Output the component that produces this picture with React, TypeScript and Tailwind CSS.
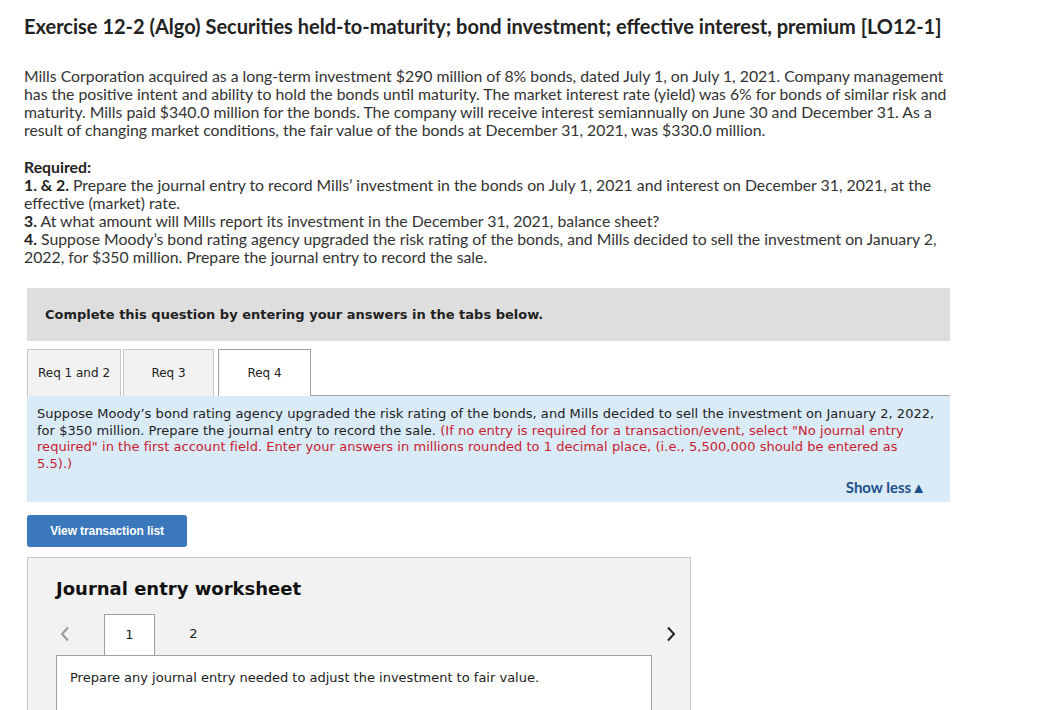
import React from 'react'

const sans = "font-['Lato',sans-serif]"
const verdana = "font-['DejaVu_Sans',Verdana,sans-serif]"

const App = () => {
  return (
    <div className="min-h-[710px] bg-white text-[#333]">
      <div className="w-[962px] pl-[24px] pt-[13px]">
        {/* Heading */}
        <h1 className={`${sans} text-[20px] font-bold leading-[26px] text-[#222]`}>
          Exercise 12-2 (Algo) Securities held-to-maturity; bond investment; effective interest, premium [LO12-1]
        </h1>

        <p className={`${sans} mt-[28px] text-[15.8px] leading-[18px]`}>
          Mills Corporation acquired as a long-term investment $290 million of 8% bonds, dated July 1, on July 1, 2021. Company management
          has the positive intent and ability to hold the bonds until maturity. The market interest rate (yield) was 6% for bonds of similar risk and
          maturity. Mills paid $340.0 million for the bonds. The company will receive interest semiannually on June 30 and December 31. As a
          result of changing market conditions, the fair value of the bonds at December 31, 2021, was $330.0 million.
        </p>

        <div className={`${sans} mt-[19px] text-[15.8px] leading-[18px]`}>
          <p className="font-bold text-[#222]">Required:</p>
          <p>
            <b className="text-[#222]">1. &amp; 2.</b> Prepare the journal entry to record Mills’ investment in the bonds on July 1, 2021 and interest on December 31, 2021, at the effective (market) rate.
          </p>
          <p>
            <b className="text-[#222]">3.</b> At what amount will Mills report its investment in the December 31, 2021, balance sheet?
          </p>
          <p>
            <b className="text-[#222]">4.</b> Suppose Moody’s bond rating agency upgraded the risk rating of the bonds, and Mills decided to sell the investment on January 2, 2022, for $350 million. Prepare the journal entry to record the sale.
          </p>
        </div>
      </div>

      <div className="ml-[27px] mt-[22px] w-[923px]">
        {/* Instruction bar */}
        <div className={`${verdana} flex h-[53px] items-center bg-[#dedede] pl-[18px] text-[13px] font-bold text-[#222]`}>
          Complete this question by entering your answers in the tabs below.
        </div>

        {/* Tabs */}
        <div className={`${verdana} mt-[8px] flex items-end text-[12px] text-[#222]`}>
          <div className="flex h-[47px] w-[94px] items-center justify-center border border-b-0 border-[#c8c8c8] bg-[#f2f2f2]">Req 1 and 2</div>
          <div className="ml-[2px] flex h-[47px] w-[91px] items-center justify-center border border-b-0 border-[#c8c8c8] bg-[#f2f2f2]">Req 3</div>
          <div className="ml-[4px] flex h-[47px] w-[93px] items-center justify-center border border-b-0 border-[#a0a0a0] bg-white">Req 4</div>
          <div className="h-[47px] flex-1 border-b border-[#a0a0a0]" />
        </div>

        <div className={`${verdana} bg-[#daebf8] px-[10px] pb-[6px] pt-[10px] text-[13px] leading-[16.5px] tracking-[0.04px]`}>
          <p className="w-[902px] text-[#222]">
            Suppose Moody’s bond rating agency upgraded the risk rating of the bonds, and Mills decided to sell the investment on January 2, 2022,
            for $350 million. Prepare the journal entry to record the sale.{' '}
            <span className="text-[#c8202f]">
              (If no entry is required for a transaction/event, select "No journal entry required" in the first account field. Enter your answers in millions rounded to 1 decimal place, (i.e., 5,500,000 should be entered as
              <br />
              5.5).)
            </span>
          </p>
          <div className="mt-[7px] flex justify-end pr-[14px]">
            <span className={`${sans} text-[15px] font-bold tracking-normal text-[#1f4f8a]`}>Show less▲</span>
          </div>
        </div>

        <button className="mt-[13px] h-[32px] w-[160px] rounded-[3px] bg-[#3a77bb] font-['Liberation_Sans',Arial,sans-serif] text-[12px] font-bold tracking-[-0.1px] text-white">
          View transaction list
        </button>

        {/* Worksheet */}
        <div className="mt-[10px] h-[180px] w-[664px] border border-[#c8c8c8] bg-[#f2f2f2] pl-[28px] pr-[38px] pt-[18px]">
          <h2 className={`${verdana} text-[18px] font-bold leading-[26px] text-[#111]`}>Journal entry worksheet</h2>
          <div className={`${verdana} mt-[12px] flex items-end text-[13px] text-[#222]`}>
            <div className="flex h-[41px] w-[48px] items-center">
              <svg width="10" height="16" viewBox="0 0 10 16" className="ml-[4px]">
                <path d="M8 1.5 L2 8 L8 14.5" fill="none" stroke="#999" strokeWidth="2" />
              </svg>
            </div>
            <div className="flex h-[41px] w-[51px] items-center justify-center border border-b-0 border-[#a0a0a0] bg-white">1</div>
            <div className="flex h-[41px] w-[77px] items-center justify-center">2</div>
            <div className="flex h-[41px] flex-1 items-center justify-end">
              <svg width="10" height="16" viewBox="0 0 10 16" className="mr-[-24px]">
                <path d="M2 1.5 L8 8 L2 14.5" fill="none" stroke="#222" strokeWidth="2" />
              </svg>
            </div>
          </div>
          <div className={`${verdana} h-[100px] border border-[#a0a0a0] bg-white px-[13px] pt-[12px] text-[13px] text-[#222]`}>
            Prepare any journal entry needed to adjust the investment to fair value.
          </div>
        </div>
      </div>
    </div>
  )
}

export default App
